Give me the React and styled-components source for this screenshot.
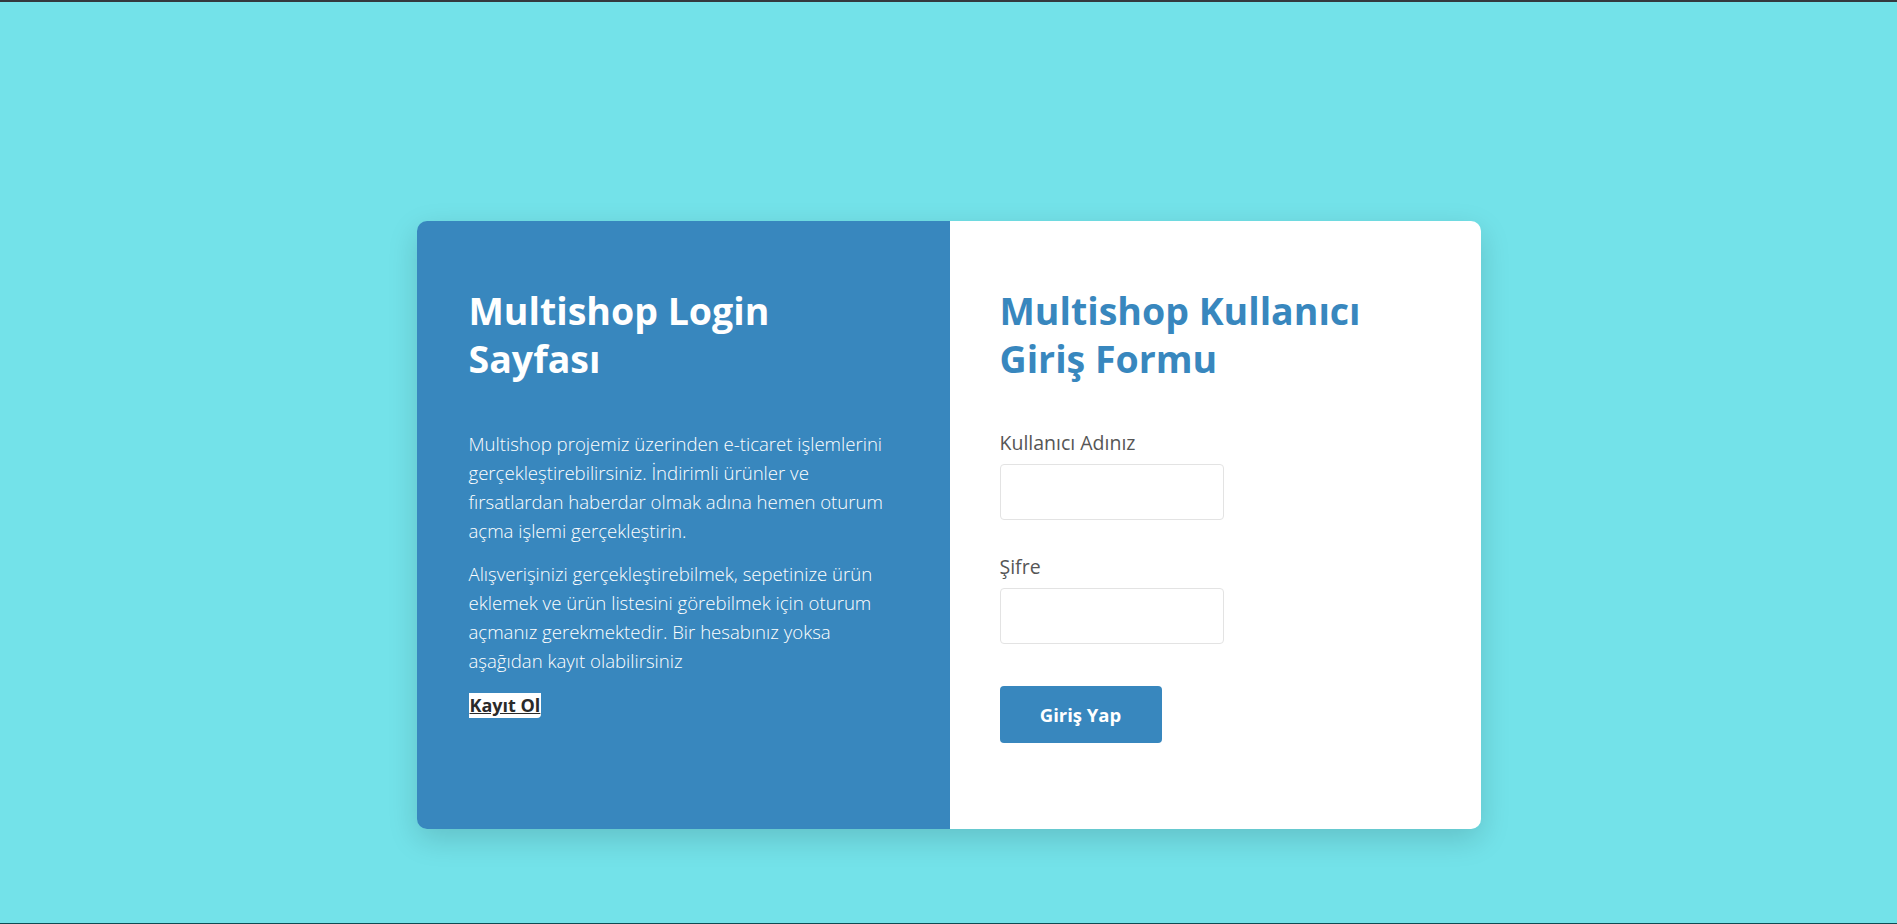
import React from "react";
import styled, { createGlobalStyle } from "styled-components";

const GlobalStyle = createGlobalStyle`
  html, body {
    margin: 0;
    padding: 0;
  }
  body {
    font-family: "Open Sans", "Liberation Sans", sans-serif;
    background-color: #73e2e9;
  }
  * {
    box-sizing: border-box;
  }
`;

const Page = styled.main`
  min-height: 100vh;
  border-top: 2px solid #34393e;
  border-bottom: 1px solid #0e4c53;
  background-color: #73e2e9;
  padding-top: 219px;
  display: flex;
  justify-content: center;
  align-items: flex-start;
`;

const Card = styled.div`
  width: 1064px;
  height: 608px;
  display: grid;
  grid-template-columns: 533px 531px;
  border-radius: 10px;
  overflow: hidden;
  box-shadow: 0 10px 30px rgba(0, 0, 0, 0.15);
`;

const Panel = styled.section`
  background-color: ${(p) => (p.$info ? "#3887be" : "#fff")};
  padding: ${(p) => (p.$info ? "66px 52px 0 52px" : "66px 50px 0 50px")};
`;

const Heading = styled.h2`
  margin: 0 0 46px 0;
  max-width: 410px;
  font-size: 37.5px;
  line-height: 48px;
  font-weight: 700;
  color: ${(p) => (p.$light ? "#fff" : "#3887be")};
`;

const Text = styled.p`
  margin: 0 0 14px 0;
  font-size: 18.6px;
  line-height: 29px;
  font-weight: 300;
  color: #fff;
`;

const RegisterLink = styled.a`
  display: inline-block;
  margin-top: 4px;
  padding: 0 1px;
  background: #fff;
  border-radius: 0 0 4px 0;
  color: #2a2a2a;
  font-size: 18px;
  line-height: 25px;
  font-weight: 700;
  text-decoration: underline;
  cursor: pointer;
`;

const Form = styled.form`
  display: flex;
  flex-direction: column;
  align-items: flex-start;
`;

const Field = styled.div`
  display: flex;
  flex-direction: column;
  margin-bottom: ${(p) => p.$gap || "33px"};
`;

const Label = styled.label`
  font-size: 19.5px;
  line-height: 27px;
  font-weight: 500;
  color: #565656;
  margin-bottom: 8px;
`;

const Input = styled.input`
  width: 224px;
  height: 56px;
  border: 1px solid #e3e3e3;
  border-radius: 4px;
  padding: 0 12px;
  font-size: 16px;
  font-family: inherit;
  outline: none;
`;

const Button = styled.button`
  width: 162px;
  height: 57px;
  border: none;
  border-radius: 4px;
  background-color: #3887be;
  color: #fff;
  font-family: inherit;
  font-size: 18.5px;
  font-weight: 700;
  cursor: pointer;
`;

export default function App() {
  return (
    <>
      <GlobalStyle />
      <Page>
        <Card>
          <Panel $info>
            <Heading $light>Multishop Login Sayfası</Heading>
            <Text>
              Multishop projemiz üzerinden e-ticaret işlemlerini
              gerçekleştirebilirsiniz. İndirimli ürünler ve fırsatlardan haberdar
              olmak adına hemen oturum açma işlemi gerçekleştirin.
            </Text>
            <Text>
              Alışverişinizi gerçekleştirebilmek, sepetinize ürün eklemek ve ürün
              listesini görebilmek için oturum açmanız gerekmektedir. Bir
              hesabınız yoksa aşağıdan kayıt olabilirsiniz
            </Text>
            <RegisterLink>Kayıt Ol</RegisterLink>
          </Panel>
          <Panel>
            <Heading>Multishop Kullanıcı Giriş Formu</Heading>
            <Form onSubmit={(e) => e.preventDefault()}>
              <Field>
                <Label>Kullanıcı Adınız</Label>
                <Input type="text" />
              </Field>
              <Field $gap="42px">
                <Label>Şifre</Label>
                <Input type="password" />
              </Field>
              <Button type="submit">Giriş Yap</Button>
            </Form>
          </Panel>
        </Card>
      </Page>
    </>
  );
}
